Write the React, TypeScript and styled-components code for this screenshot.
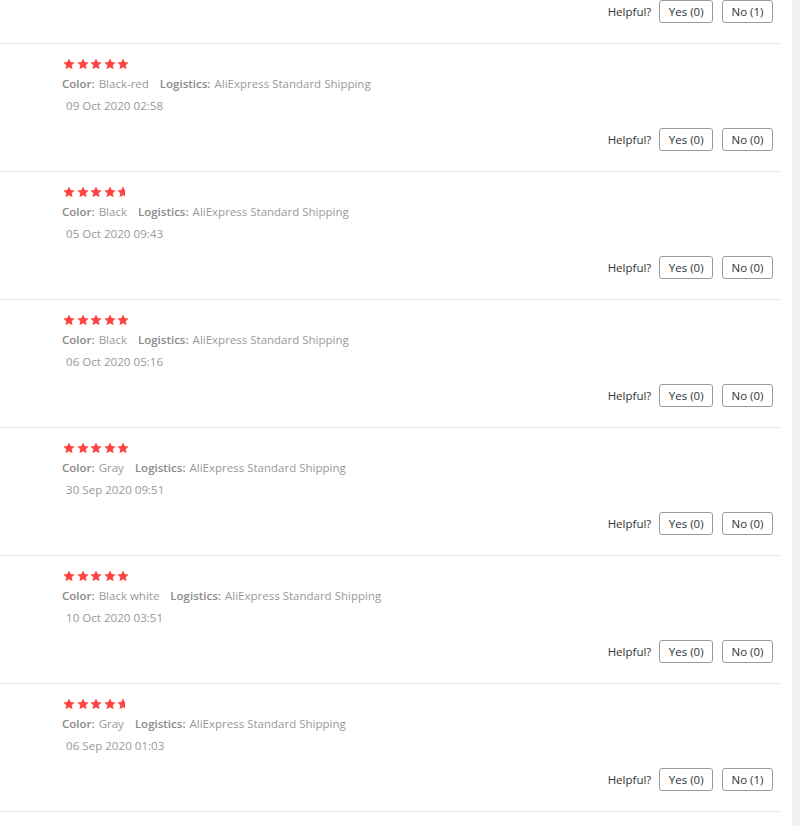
import React from "react";
import styled, { createGlobalStyle } from "styled-components";

const GlobalStyle = createGlobalStyle`
  html, body { margin: 0; padding: 0; background: #fff; }
  body { font-family: "Open Sans", "Liberation Sans", sans-serif; }
`;

const Page = styled.div`
  display: flex;
  width: 800px;
  height: 826px;
  overflow: hidden;
`;

const List = styled.div`
  width: 780px;
  flex: none;
`;

const Gutter = styled.div`
  flex: 1;
`;

const Scroll = styled.div`
  width: 8px;
  flex: none;
  background: #f1f1f1;
`;

const Item = styled.div<{ $partial?: boolean }>`
  display: flex;
  flex-direction: column;
  padding: ${(p) => (p.$partial ? "0" : "14px")} 0 20px 62px;
  border-bottom: 1px solid #e8e8e8;
`;

const Stars = styled.div`
  display: flex;
  gap: 1.6px;
  height: 12px;
  margin-left: 1px;
  margin-bottom: 4px;
`;

const StarBox = styled.span<{ $w: number }>`
  display: block;
  width: ${(p) => p.$w}px;
  height: 12px;
  overflow: hidden;
  flex: none;

  svg {
    display: block;
  }
`;

const Meta = styled.div`
  display: flex;
  font-size: 11.5px;
  line-height: 20px;
  color: #999;
  white-space: nowrap;
`;

const MetaPart = styled.span`
  margin-right: 11px;
`;

const Label = styled.b`
  font-weight: 600;
  color: #8a8a8a;
  margin-right: 4px;
`;

const DateLine = styled.div`
  font-size: 11.6px;
  line-height: 20px;
  color: #999;
  margin: 2px 0 0 4px;
`;

const Helpful = styled.div<{ $partial?: boolean }>`
  display: flex;
  justify-content: flex-end;
  align-items: center;
  gap: 8px;
  padding-right: 7px;
  margin-top: ${(p) => (p.$partial ? "0" : "12px")};
  font-size: 11.5px;
  color: #333;
`;

const HelpText = styled.span`
  line-height: 23px;
`;

const Btn = styled.button`
  height: 23px;
  box-sizing: border-box;
  padding: 0 8.5px;
  border: 1px solid #9a9a9a;
  border-radius: 3px;
  background: #fff;
  font-family: "Open Sans", "Liberation Sans", sans-serif;
  font-size: 11.5px;
  color: #333;
  line-height: 21px;
  cursor: pointer;

  & + & {
    margin-left: 1px;
  }
`;

const Star = () => (
  <svg width="12" height="12" viewBox="0 0 24 24">
    <path
      d="M12 1l3.4 7.2 7.9.9-5.9 5.4 1.7 7.9L12 18.3l-7.1 4.1 1.7-7.9L.7 9.1l7.9-.9z"
      fill="#f44"
    />
  </svg>
);

type Review = {
  rating: number;
  color: string;
  date: string;
  yes: number;
  no: number;
};

const reviews: Review[] = [
  { rating: 5, color: "Black-red", date: "09 Oct 2020 02:58", yes: 0, no: 0 },
  { rating: 4.7, color: "Black", date: "05 Oct 2020 09:43", yes: 0, no: 0 },
  { rating: 5, color: "Black", date: "06 Oct 2020 05:16", yes: 0, no: 0 },
  { rating: 5, color: "Gray", date: "30 Sep 2020 09:51", yes: 0, no: 0 },
  { rating: 5, color: "Black white", date: "10 Oct 2020 03:51", yes: 0, no: 0 },
  { rating: 4.7, color: "Gray", date: "06 Sep 2020 01:03", yes: 0, no: 1 },
];

const Rating = ({ value }: { value: number }) => (
  <Stars>
    {[0, 1, 2, 3, 4].map((i) => {
      const f = Math.max(0, Math.min(1, value - i));
      if (f <= 0) return null;
      return (
        <StarBox key={i} $w={Math.round(12 * f)}>
          <Star />
        </StarBox>
      );
    })}
  </Stars>
);

const HelpfulRow = ({ yes, no, partial }: { yes: number; no: number; partial?: boolean }) => (
  <Helpful $partial={partial}>
    <HelpText>Helpful?</HelpText>
    <Btn>Yes ({yes})</Btn>
    <Btn>No ({no})</Btn>
  </Helpful>
);

export default function App() {
  return (
    <Page>
      <GlobalStyle />
      <List>
        <Item $partial>
          <HelpfulRow yes={0} no={1} partial />
        </Item>
        {reviews.map((r, i) => (
          <Item key={i}>
            <Rating value={r.rating} />
            <Meta>
              <MetaPart>
                <Label>Color:</Label>
                {r.color}
              </MetaPart>
              <MetaPart>
                <Label>Logistics:</Label>
                AliExpress Standard Shipping
              </MetaPart>
            </Meta>
            <DateLine>{r.date}</DateLine>
            <HelpfulRow yes={r.yes} no={r.no} />
          </Item>
        ))}
      </List>
      <Gutter />
      <Scroll />
    </Page>
  );
}
